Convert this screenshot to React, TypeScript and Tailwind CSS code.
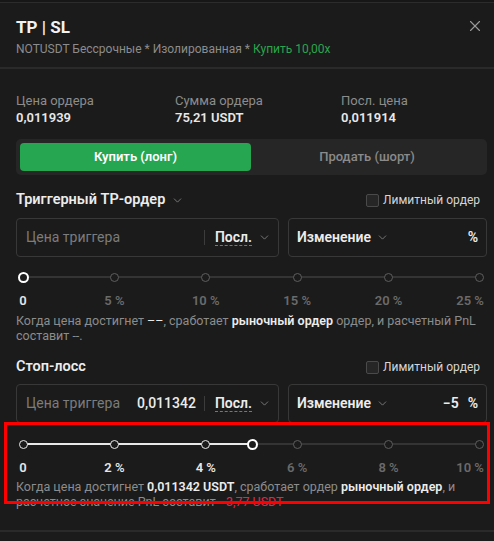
import React from 'react';
import { X, ChevronDown } from 'lucide-react';

const Chevron = () => <ChevronDown className="w-[13px] h-[13px] text-[#8a8a8a]" strokeWidth={1.5} />;

interface SliderProps {
  labels: string[];
  activeCount: number; // dots that are passed (white)
  thumb: number | null; // px from left of track start
}

const Slider: React.FC<SliderProps> = ({ labels, activeCount, thumb }) => {
  return (
    <div>
      <div className="relative h-[14px]">
        <div className="absolute left-[7px] right-[7px] top-[6px] h-[2px] bg-[#343434]" />
        {thumb !== null && (
          <div className="absolute left-[7px] top-[6px] h-[2px] bg-[#e8e8e8]" style={{ width: thumb }} />
        )}
        <div className="relative flex justify-between h-full">
          {labels.map((l, i) => (
            <div key={l} className="w-[14px] h-[14px] flex items-center justify-center">
              {i === 0 && thumb === null ? (
                <div className="w-[11px] h-[11px] rounded-full border-[2.5px] border-white bg-[#1b1b1b]" />
              ) : (
                <div className={`w-[9px] h-[9px] rounded-full border-[1.5px] bg-[#1b1b1b] ${i < activeCount ? 'border-[#e8e8e8]' : 'border-[#5e5e5e]'}`} />
              )}
            </div>
          ))}
        </div>
        {thumb !== null && (
          <div
            className="absolute top-[1.5px] w-[11px] h-[11px] rounded-full border-[2.5px] border-white bg-[#1b1b1b]"
            style={{ left: thumb + 7 - 5.5 }}
          />
        )}
      </div>
      <div className="flex justify-between mt-[9px] h-[16px] leading-[16px] text-[13px] font-semibold">
        {labels.map((l, i) => (
          <div
            key={l}
            className={`w-[14px] flex whitespace-nowrap ${i === labels.length - 1 ? 'justify-end pr-[3px]' : 'justify-center'} ${i < activeCount || i === 0 ? 'text-[#e6e6e6]' : 'text-[#6a6a6a]'}`}
          >
            {l}
          </div>
        ))}
      </div>
    </div>
  );
};

const Checkbox = () => (
  <div className="flex items-center gap-[4px] mr-[7px] text-[12px] text-[#d6d6d6]">
    <div className="w-[13px] h-[13px] rounded-[2px] border border-[#4a4a4a] bg-[#262626]" />
    Лимитный ордер
  </div>
);

const TriggerRow = ({ value, change }: { value?: string; change?: string }) => (
  <div className="flex gap-[9px] h-[39px]">
    <div className="flex-1 border border-[#383838] rounded-[4px] flex items-center pl-[9px] pr-[7px]">
      <span className="text-[14px] text-[#7c7c7c]">Цена триггера</span>
      <span className="ml-auto text-[14px] font-medium text-[#ececec] pr-[8px]">{value}</span>
      <div className="w-px h-[15px] bg-[#3c3c3c]" />
      <span className="ml-[10px] text-[14px] font-semibold text-[#ececec] border-b border-dashed border-[#777] leading-[16px]">Посл.</span>
      <span className="ml-[6px]"><Chevron /></span>
    </div>
    <div className="w-[199px] border border-[#383838] rounded-[4px] flex items-center pl-[8px] pr-[8px]">
      <span className="text-[14px] font-semibold text-[#ececec]">Изменение</span>
      <span className="ml-[5px]"><Chevron /></span>
      <span className="ml-auto text-[14px] font-semibold text-[#ececec]">{change}</span>
      <span className="ml-[9px] text-[14px] font-semibold text-[#ececec]">%</span>
    </div>
  </div>
);

export default function App() {
  return (
    <div className="relative w-[494px] h-[541px] bg-[#1b1b1b] overflow-hidden font-['Roboto',sans-serif]">
      <div className="h-[3px] border-b border-[#2c2c2c] bg-[#171717]" />
      <div className="pl-4 pr-[7px] pt-[13px] pb-[9px] flex">
        <div>
          <div className="text-[17px] leading-[22px] font-bold text-[#f2f2f2]">TP | SL</div>
          <div className="mt-[2px] text-[12px] leading-[18px] text-[#8c8c8c]">
            NOTUSDT Бессрочные * Изолированная * <span className="text-[#2aa54e]">Купить 10,00x</span>
          </div>
        </div>
        <X className="ml-auto mt-[1px] mr-[3px] w-[18px] h-[18px] text-[#9a9a9a]" strokeWidth={1.5} />
      </div>
      <div className="h-[2px] bg-[#2a2a2a]" />

      <div className="pl-4 pr-[7px]">
        <div className="mt-[24px] flex">
          <div className="w-[159px]">
            <div className="text-[13px] leading-[16px] text-[#8c8c8c]">Цена ордера</div>
            <div className="text-[13px] leading-[18px] font-semibold text-[#e8e8e8]">0,011939</div>
          </div>
          <div className="w-[166px]">
            <div className="text-[13px] leading-[16px] text-[#8c8c8c]">Сумма ордера</div>
            <div className="text-[13px] leading-[18px] font-semibold text-[#e8e8e8]">75,21 USDT</div>
          </div>
          <div>
            <div className="text-[13px] leading-[16px] text-[#8c8c8c]">Посл. цена</div>
            <div className="text-[13px] leading-[18px] font-semibold text-[#e8e8e8]">0,011914</div>
          </div>
        </div>

        <div className="mt-[12px] h-[36px] p-[4px] bg-[#262626] rounded-[5px] flex">
          <div className="w-[231px] bg-[#26a651] rounded-[4px] flex items-center justify-center text-[13px] font-semibold text-white">
            Купить (лонг)
          </div>
          <div className="flex-1 flex items-center justify-center text-[13px] font-medium text-[#8a8a8a]">
            Продать (шорт)
          </div>
        </div>

        <div className="mt-[15px] h-[20px] flex items-center">
          <span className="text-[14.5px] font-semibold text-[#ececec]">Триггерный TP-ордер</span>
          <span className="ml-[6px]"><Chevron /></span>
          <div className="ml-auto"><Checkbox /></div>
        </div>
        <div className="mt-[8px]"><TriggerRow /></div>
        <div className="mt-[13px]">
          <Slider labels={['0', '5 %', '10 %', '15 %', '20 %', '25 %']} activeCount={1} thumb={null} />
        </div>
        <div className="mt-[4px] text-[12.5px] leading-[15px] text-[#8c8c8c]">
          Когда цена достигнет <span className="text-[#e8e8e8]">––</span>, сработает <span className="font-semibold text-[#ececec]">рыночный ордер</span> ордер, и расчетный PnL составит --.
        </div>

        <div className="mt-[14px] h-[20px] flex items-center">
          <span className="text-[14.5px] font-semibold text-[#ececec]">Стоп-лосс</span>
          <div className="ml-auto"><Checkbox /></div>
        </div>
        <div className="mt-[7px]"><TriggerRow value="0,011342" change="−5" /></div>
        <div className="mt-[14px]">
          <Slider labels={['0', '2 %', '4 %', '6 %', '8 %', '10 %']} activeCount={3} thumb={229} />
        </div>
        <div className="mt-[3px] text-[12.5px] leading-[15px] text-[#8c8c8c]">
          Когда цена достигнет <span className="font-semibold text-[#ececec]">0,011342 USDT</span>, сработает ордер <span className="font-semibold text-[#ececec]">рыночный ордер</span>, и расчетное значение PnL составит <span className="text-[#e0294a]">−3,77 USDT</span>
        </div>
      </div>

      <div className="absolute left-0 right-0 top-[530px] h-[2px] bg-[#2a2a2a]" />
      <div className="absolute left-[4px] top-[422px] w-[486px] h-[82px] border-[3px] border-[#ff0000]" />
    </div>
  );
}
